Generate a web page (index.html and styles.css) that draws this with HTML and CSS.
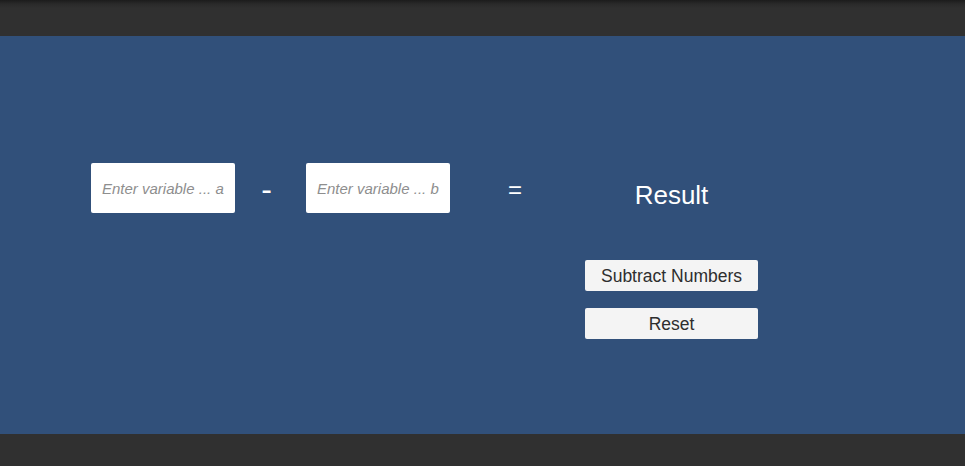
FILE: index.html
```html
<!DOCTYPE html>
<html>
<head>
<meta charset="utf-8">
<link rel="stylesheet" href="styles.css">
</head>
<body>
<div class="topbar"></div>
<main class="panel">
  <div class="row">
    <div class="calc">
      <input class="field" type="text" placeholder="Enter variable ... a">
      <span class="op op-minus">-</span>
      <input class="field" type="text" placeholder="Enter variable ... b">
      <span class="op op-eq">=</span>
    </div>
    <div class="side">
      <div class="result">Result</div>
      <button class="btn btn-first">Subtract Numbers</button>
      <button class="btn">Reset</button>
    </div>
  </div>
</main>
<div class="bottombar"></div>
</body>
</html>
```
FILE: styles.css
```css
html, body {
  margin: 0;
  padding: 0;
  width: 965px;
  height: 466px;
  overflow: hidden;
  background: #303030;
  font-family: "Liberation Sans", Arial, sans-serif;
}
.topbar {
  height: 36px;
  background: linear-gradient(to bottom, #1c1c1c 0px, #2a2a2a 4px, #303030 8px, #303030 100%);
}
.panel {
  height: 398px;
  background: #31507a;
  box-sizing: border-box;
  padding-top: 127px;
  padding-left: 91px;
}
.bottombar {
  height: 32px;
  background: #303030;
}
.row {
  display: flex;
  align-items: flex-start;
}
.calc {
  display: flex;
  align-items: center;
  height: 50px;
}
.field {
  width: 144px;
  height: 50px;
  box-sizing: border-box;
  border: none;
  border-radius: 2px;
  background: #ffffff;
  padding: 0 0 0 11px;
  margin: 0;
  font-family: "Liberation Sans", Arial, sans-serif;
  font-size: 15px;
  font-style: italic;
  color: #333;
  outline: none;
}
.field::placeholder {
  color: #8e8e8e;
  font-style: italic;
}
.op {
  color: #ffffff;
  text-align: center;
  font-size: 26px;
  line-height: 50px;
  padding-top: 4px;
  box-sizing: border-box;
}
.op-minus {
  width: 71px;
  padding-right: 8px;
  font-size: 32px;
  padding-top: 2px;
}
.op-eq {
  width: 130px;
  font-size: 24px;
}
.side {
  margin-left: 5px;
  width: 173px;
  display: flex;
  flex-direction: column;
}
.result {
  height: 64px;
  line-height: 64px;
  text-align: center;
  color: #ffffff;
  font-size: 26px;
}
.btn {
  width: 173px;
  height: 31px;
  box-sizing: border-box;
  margin: 17px 0 0 0;
  padding: 2px 0 0 0;
  border: none;
  border-radius: 2px;
  background: #f4f4f4;
  color: #2e2e2e;
  font-family: "Liberation Sans", Arial, sans-serif;
  font-size: 17.5px;
  line-height: 29px;
}
.btn-first {
  margin-top: 33px;
}
```
